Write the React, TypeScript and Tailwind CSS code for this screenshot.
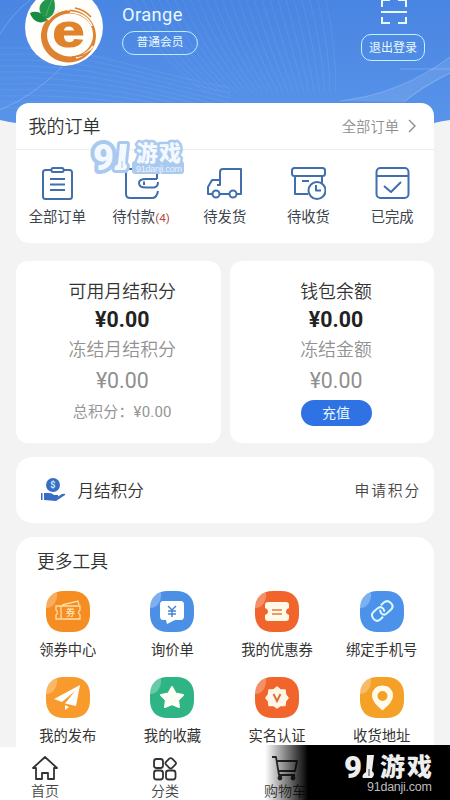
import type { ReactNode } from 'react'

const HeaderWaves = () => {
  const lines = Array.from({ length: 26 }, (_, i) => i)

  return (
    <svg className="absolute inset-0" width="450" height="124" viewBox="0 0 450 124" fill="none">
      <defs>
        <linearGradient id="sky" x1="0" y1="0" x2="0" y2="1">
          <stop offset="0" stopColor="#4985e2" />
          <stop offset="1" stopColor="#5894e9" />
        </linearGradient>
      </defs>
      <path d="M0 0H450V120Q442 121 434 123H16Q8 122 0 120Z" fill="url(#sky)" />
      <g stroke="#fff" strokeWidth="0.7" strokeOpacity="0.1">
        {lines.map((i) => (
          <path key={i} d={`M${125 + i * 8} -4 Q${150 + i * 7.5} 50 ${205 + i * 5.2} 92`} />
        ))}
        {lines.slice(0, 11).map((i) => (
          <path key={i} d={`M0 ${48 + i * 6} Q60 ${46 + i * 6} 120 ${62 + i * 5} T230 ${88 + i * 5}`} />
        ))}
      </g>
      <path d="M0 34Q12 14 30 0M0 110Q35 95 62 67" stroke="#fff" strokeOpacity="0.2" />
      <path d="M340 101Q400 94 450 57V74Q428 85 404 102Z" fill="#fff" fillOpacity="0.1" />
      <path d="M340 101Q400 94 450 57M404 102Q424 85 450 73M400 69H450" stroke="#fff" strokeOpacity="0.2" />
    </svg>
  )
}

const Avatar = () => (
  <svg className="ml-6 -mt-3 shrink-0" width="80" height="80" viewBox="0 0 80 80" fill="none">
    <circle cx="40" cy="39" r="39" fill="#fffefa" />
    <path
      fillRule="evenodd"
      d="M44.500 21.500A27.500 26.500 0 1 1 44.400 21.500ZM46 25.500A23 21.500 0 1 0 46.100 25.500Z"
      fill="#dc8230"
    />
    <path d="M24 32Q32 22 46 21.500M46 24Q62 25 68 38M52 70Q64 66 69 58" stroke="#fffefa" strokeWidth="1.500" />
    <path d="M27 31Q34 24 43 23M51 20Q61 22 67 29M48 69Q61 68 66 63" stroke="#dc8230" strokeWidth="1.500" />
    <text
      className="font-['Liberation_Sans']"
      x="28.500"
      y="58.500"
      fontSize="46"
      fontWeight="700"
      fill="#e0832a"
      stroke="#e0832a"
      strokeWidth="1.200"
      textLength="32"
      lengthAdjust="spacingAndGlyphs"
    >
      e
    </text>
    <path d="M6 25C12 22 20 25 23 32C17 37 9 34 6 25Z" fill="#168b43" />
    <path d="M21 31C11 21 15 13 29 8C33 20 31 29 21 31Z" fill="#22964b" />
    <path d="M22 28Q24 20 28 12" stroke="#5ab878" strokeWidth="0.800" />
  </svg>
)

const orderIcons: { label: string; count?: string; icon: ReactNode }[] = [
  {
    label: '全部订单',
    icon: (
      <>
        <rect x="3" y="3" width="29" height="29" rx="2.500" />
        <rect x="11.500" y="1" width="12" height="4" rx="1.500" fill="#fff" />
        <path d="M10 12H25M10 17.500H25M10 23H25" />
      </>
    ),
  },
  {
    label: '待付款',
    count: '(4)',
    icon: (
      <>
        <path d="M33 12V6Q33 2 29 2H5Q2 2 2 6V27Q2 31 6 31H29Q33 30 34 24M33 12H22Q15 12 15 16Q15 20.500 22 20.500H30Q34 20 34 15" />
        <path d="M20 14.500V18" />
      </>
    ),
  },
  {
    label: '待发货',
    icon: (
      <>
        <path d="M5 27H1V20L5 13H13V5Q13 2 16 2H34V27H30M13 27H22M10 18H13V13" />
        <circle cx="9" cy="27" r="3.500" />
        <circle cx="26" cy="27" r="3.500" />
      </>
    ),
  },
  {
    label: '待收货',
    icon: (
      <>
        <rect x="1" y="1" width="33" height="8" rx="2.500" />
        <path d="M4 9V27H17M31 9V16M11 14H18" />
        <circle cx="26" cy="23.500" r="8.500" fill="#fff" />
        <path d="M25 18V23.500H30" />
      </>
    ),
  },
  {
    label: '已完成',
    icon: (
      <>
        <rect x="1.500" y="1" width="32" height="30" rx="4" />
        <path d="M2 9H33M9 19L16 25L26 15" />
      </>
    ),
  },
]

const tools: { label: string; color: string; icon: ReactNode }[] = [
  {
    label: '领券中心',
    color: '#f68d22',
    icon: (
      <>
        <path d="M10 15H34V19Q31 21.500 34 24V28H10V24Q13 21.500 10 19ZM15 15V28M16 14L32 10L33 14" stroke="#ffdda5" strokeWidth="1.300" />
        <text x="20" y="25" fontSize="9" fontWeight="700" fill="#ffdda5">券</text>
      </>
    ),
  },
  {
    label: '询价单',
    color: '#4c90e6',
    icon: (
      <>
        <path d="M13 10H31Q34 10 34 14V25Q34 29 31 29H25L17 33L16 29H13Q10 29 10 25V14Q10 10 13 10Z" fill="#fff" />
        <path d="M18 15L22 19L26 15M18 20H26M18 23H26M22 19V26" stroke="#4c82cf" strokeWidth="1.500" />
      </>
    ),
  },
  {
    label: '我的优惠券',
    color: '#f1642c',
    icon: (
      <>
        <path d="M13 11H31Q34 11 34 14V17Q31 18 31 21Q31 23 34 24V27Q34 30 31 30H13Q10 30 10 27V24Q13 23 13 21Q13 18 10 17V14Q10 11 13 11Z" fill="#fff9e8" />
        <path d="M17 19H27M17 23H27" stroke="#e77a43" strokeWidth="1.500" />
      </>
    ),
  },
  {
    label: '绑定手机号',
    color: '#4c92ea',
    icon: (
      <g stroke="#d9fbff" strokeWidth="2" transform="rotate(-42 22 20)">
        <path d="M19 25H15Q10.500 25 10.500 20.500Q10.500 15 15 15H20Q24.500 15 24.500 19Q24.500 21 23 22" />
        <path d="M25 15H29Q34 15 34 20.500Q34 25 29 25H24Q20 25 20 21Q20 19 21.500 18" />
      </g>
    ),
  },
  {
    label: '我的发布',
    color: '#f89b2c',
    icon: (
      <>
        <path d="M34 8L8 22L16 25L29 14L19 26.500L30 29Z" fill="#fff" />
        <path d="M19 28V33L23 30Z" fill="#fff" />
      </>
    ),
  },
  {
    label: '我的收藏',
    color: '#2eb485',
    icon: (
      <path
        d="M22 10L25.500 16.500L33 18L28 23L29 30L22 27L15 30L16 23L11 18L18.500 16.500Z"
        fill="#fffef4"
        stroke="#fffef4"
        strokeWidth="2"
        strokeLinejoin="round"
      />
    ),
  },
  {
    label: '实名认证',
    color: '#f1642c',
    icon: (
      <>
        <path
          d="M22 10L25.500 13L30 13L30.500 17.500L33 21L30.500 24L30 28.500L25.500 28.500L22 31L18.500 28.500L14 28.500L13.500 24L11 21L13.500 17.500L14 13L18.500 13Z"
          fill="#fff6e7"
          stroke="#fff6e7"
          strokeWidth="1.500"
          strokeLinejoin="round"
        />
        <path d="M18.500 17L22 24L25.500 17" stroke="#dd7040" strokeWidth="2" />
      </>
    ),
  },
  {
    label: '收货地址',
    color: '#f5a027',
    icon: (
      <path
        fillRule="evenodd"
        d="M22.500 8.500Q33 9 33 19Q33 25 22.500 33.500Q12 25 12 19Q12 9 22.500 8.500ZM22.500 14A5 5 0 1 0 22.500 24A5 5 0 1 0 22.500 14Z"
        fill="#fffbea"
      />
    ),
  },
]

const ToolIcon = ({ color, children }: { color: string; children: ReactNode }) => (
  <svg width="44" height="41" viewBox="0 0 44 41" fill="none">
    <path d="M18 0H26C38 0 44 7 44 18V23C44 34 38 41 26 41H18C6 41 0 34 0 23V18C0 7 6 0 18 0Z" fill={color} />
    <path d="M11 1C4 3 0 9 0 17C8 17 12 9 11 1Z" fill="#fff" fillOpacity="0.28" />
    {children}
  </svg>
)

const SiteLogo = ({ soft = false }: { soft?: boolean }) =>
  soft ? (
    <svg className="overflow-visible" width="98" height="40" viewBox="0 0 98 40">
      <rect x="44" y="22" width="52" height="13" rx="3" fill="#a9c9ef" />
      <g fill="#f3f9ff" stroke="#a9c9ef" strokeWidth="8" strokeLinejoin="round" style={{ paintOrder: 'stroke' }}>
        <text x="5" y="31" fontSize="36" fontWeight="900">9</text>
        <path d="M32 5H39L37 24Q41 28 37 31H27Q25 28 30 25Z" strokeWidth="6" />
        <text x="48" y="22" fontSize="22" fontWeight="900" strokeWidth="5" textLength="45">游戏</text>
      </g>
      <text className="font-['Liberation_Sans']" x="48" y="33" fontSize="9" fill="#eaf4ff" textLength="46">91danji.com</text>
      <path d="M34 22V29" stroke="#a9c9ef" />
    </svg>
  ) : (
    <svg className="overflow-visible" width="92" height="42" viewBox="0 0 92 42" fill="#eee">
      <text x="1" y="24" fontSize="31" fontWeight="900">9</text>
      <path d="M24 1H31L29 17Q33 20 29 24H20Q18 21 23 18Z" />
      <path d="M26 15V22" stroke="#111" strokeWidth="0.800" />
      <text x="37" y="22" fontSize="25" fontWeight="900" textLength="52">游戏</text>
      <text className="font-['Liberation_Sans']" x="24" y="37" fontSize="12.500" fill="#bdbdbd" textLength="65">91danji.com</text>
    </svg>
  )

const navItems: { label: string; icon: ReactNode }[] = [
  {
    label: '首页',
    icon: <path d="M14 2L2 13H5V24H11V18H17V24H23V13H26Z" />,
  },
  {
    label: '分类',
    icon: (
      <>
        <rect x="3" y="4" width="9" height="9" rx="2.500" />
        <rect x="3" y="15.500" width="9" height="9" rx="2.500" />
        <rect x="15" y="15.500" width="9.500" height="9" rx="2.500" />
        <rect x="15.500" y="4" width="8.500" height="8.500" rx="2" transform="rotate(45 19.700 8.200)" />
      </>
    ),
  },
  {
    label: '购物车',
    icon: (
      <>
        <path d="M1 2H5L8 20H24M6 6H26L24 16H8" />
        <circle cx="9" cy="23" r="1.500" fill="#333" />
        <circle cx="22" cy="23" r="1.500" fill="#333" />
      </>
    ),
  },
]

const App = () => {
  return (
    <div className="relative flex h-[800px] w-[450px] flex-col overflow-hidden bg-[#f3f3f3] font-[Roboto,'Noto_Sans_CJK_SC',sans-serif] text-[#333]">
      <header className="relative h-[103px] shrink-0">
        <HeaderWaves />
        <div className="relative flex text-[#e9faff]">
          <Avatar />
          <div className="ml-[18px] pt-[3px]">
            <p className="text-[18.300px] leading-6 tracking-[0.4px]">Orange</p>
            <p className="mt-1 flex h-6 w-[76px] items-center justify-center rounded-full border-[1.5px] border-[#b9edff] text-[11.700px]">
              普通会员
            </p>
          </div>
          <div className="ml-auto mr-[25px] flex flex-col items-center">
            <svg width="28" height="25" viewBox="0 0 28 25" fill="none" stroke="#e6fbff" strokeWidth="2">
              <path d="M3 7V0H11M19 0H27V7M3 17V23H11M19 23H27V17M2 12H28" />
            </svg>
            <button className="mt-[9px] h-[27px] w-[64px] rounded-[10px] border-[1.5px] border-[#c6f0ff] text-[12px] leading-6">
              退出登录
            </button>
          </div>
        </div>
      </header>

      <main className="relative flex h-[644px] shrink-0 flex-col overflow-hidden pl-[15.500px] pr-4">
        <section className="h-[140px] shrink-0 rounded-[13px] bg-white">
          <div className="flex h-[47px] items-center justify-between border-b border-[#eee] pl-[13px] pr-[17px]">
            <h2 className="text-[18px] font-[350]">我的订单</h2>
            <div className="flex items-center gap-2 pt-[3px] text-[14.300px] font-[350] text-[#8e8e8e]">
              全部订单
              <svg className="-mt-1" width="10" height="14" viewBox="0 0 10 14" fill="none" stroke="#888" strokeWidth="1.300">
                <path d="M2 1L8 7L2 13" />
              </svg>
            </div>
          </div>
          <div className="grid grid-cols-5 pt-[17px]">
            {orderIcons.map((item) => (
              <div key={item.label} className="flex flex-col items-center">
                <svg width="35" height="35" viewBox="0 0 35 35" fill="none" stroke="#416fae" strokeWidth="2" strokeLinejoin="round">
                  {item.icon}
                </svg>
                <p className="mt-[5px] whitespace-nowrap text-[14.300px] leading-5 text-[#3c444d]">
                  {item.label}
                  {item.count && <span className="text-[11.700px] text-[#b34b43]">{item.count}</span>}
                </p>
              </div>
            ))}
          </div>
        </section>

        <div className="mt-[18px] flex h-[182px] shrink-0 gap-[9px] text-center">
          <section className="w-[205.500px] rounded-[12px] bg-white pl-2 pt-[17px]">
            <p className="text-[17.900px] font-[350] leading-[27px]">可用月结积分</p>
            <p className="pt-px text-[21.300px] font-bold leading-[28px] text-[#222]">¥0.00</p>
            <p className="mt-px text-[17.900px] font-[350] leading-[29px] text-[#929292]">冻结月结积分</p>
            <p className="mt-[2px] text-[21.300px] leading-[30px] text-[#8f8f8f]">¥0.00</p>
            <p className="mt-1 text-[15px] leading-6 tracking-[0.2px] text-[#959595]">总积分：¥0.00</p>
          </section>
          <section className="flex w-[204px] flex-col items-center rounded-[12px] bg-white pl-2 pt-[17px]">
            <p className="text-[17.900px] font-[350] leading-[27px]">钱包余额</p>
            <p className="pt-px text-[21.300px] font-bold leading-[28px] text-[#222]">¥0.00</p>
            <p className="mt-px text-[17.900px] font-[350] leading-[29px] text-[#929292]">冻结金额</p>
            <p className="mt-[2px] text-[21.300px] leading-[30px] text-[#8f8f8f]">¥0.00</p>
            <button className="mt-1 h-[26px] w-[71px] rounded-full bg-[#2f72e4] text-[14px] leading-[25px] text-[#e9f7ff]">
              充值
            </button>
          </section>
        </div>

        <section className="mt-[14px] flex h-[66px] shrink-0 items-center rounded-[16px] bg-white pl-6 pr-[13px]">
          <svg width="26" height="24" viewBox="0 0 26 24" fill="#386dc3">
            <circle cx="13" cy="7" r="7" />
            <path d="M1 15H2.500V22H1ZM4 15H9Q12 15 14 17H18V18.500L22 16Q26 15 25 17L16 23L4 22Z" />
            <text x="10.300" y="10.300" fontSize="9" fontWeight="700" fill="#c9f1ff">$</text>
          </svg>
          <p className="ml-3 pt-1 text-[16.600px] font-[350]">月结积分</p>
          <p className="ml-auto pt-[2px] text-[14.800px] font-[350] tracking-[1.800px] text-[#444]">申请积分</p>
        </section>

        <section className="mt-[14px] h-[240px] shrink-0 rounded-[18px] bg-white pt-[11px]">
          <h2 className="pl-[21.500px] text-[17.800px] font-[350] leading-7">更多工具</h2>
          <div className="mt-[15px] grid grid-cols-4 gap-y-[14px]">
            {tools.map((tool) => (
              <div key={tool.label} className="flex h-[72px] flex-col items-center">
                <ToolIcon color={tool.color}>{tool.icon}</ToolIcon>
                <p className="mt-2 text-[14.300px] leading-5">{tool.label}</p>
              </div>
            ))}
          </div>
        </section>

        {/* watermark over the order card */}
        <div className="pointer-events-none absolute left-[88px] top-[36px]">
          <SiteLogo soft />
        </div>
      </main>

      <nav className="-ml-[15px] grid h-[53px] w-[480px] shrink-0 grid-cols-4 bg-white">
        {navItems.map((item) => (
          <div key={item.label} className="flex flex-col items-center pt-2">
            <svg width="28" height="27" viewBox="0 0 28 27" fill="none" stroke="#333" strokeWidth="1.800" strokeLinejoin="round">
              {item.icon}
            </svg>
            <p className="text-[14px] font-[350] leading-[18px] text-[#444]">{item.label}</p>
          </div>
        ))}
      </nav>

      <div className="absolute bottom-0 right-0 flex h-[55px] w-[185px] items-start justify-end bg-[linear-gradient(90deg,transparent,#000_43px)] pr-[15px] pt-[9px]">
        <SiteLogo />
      </div>
    </div>
  )
}

export default App
